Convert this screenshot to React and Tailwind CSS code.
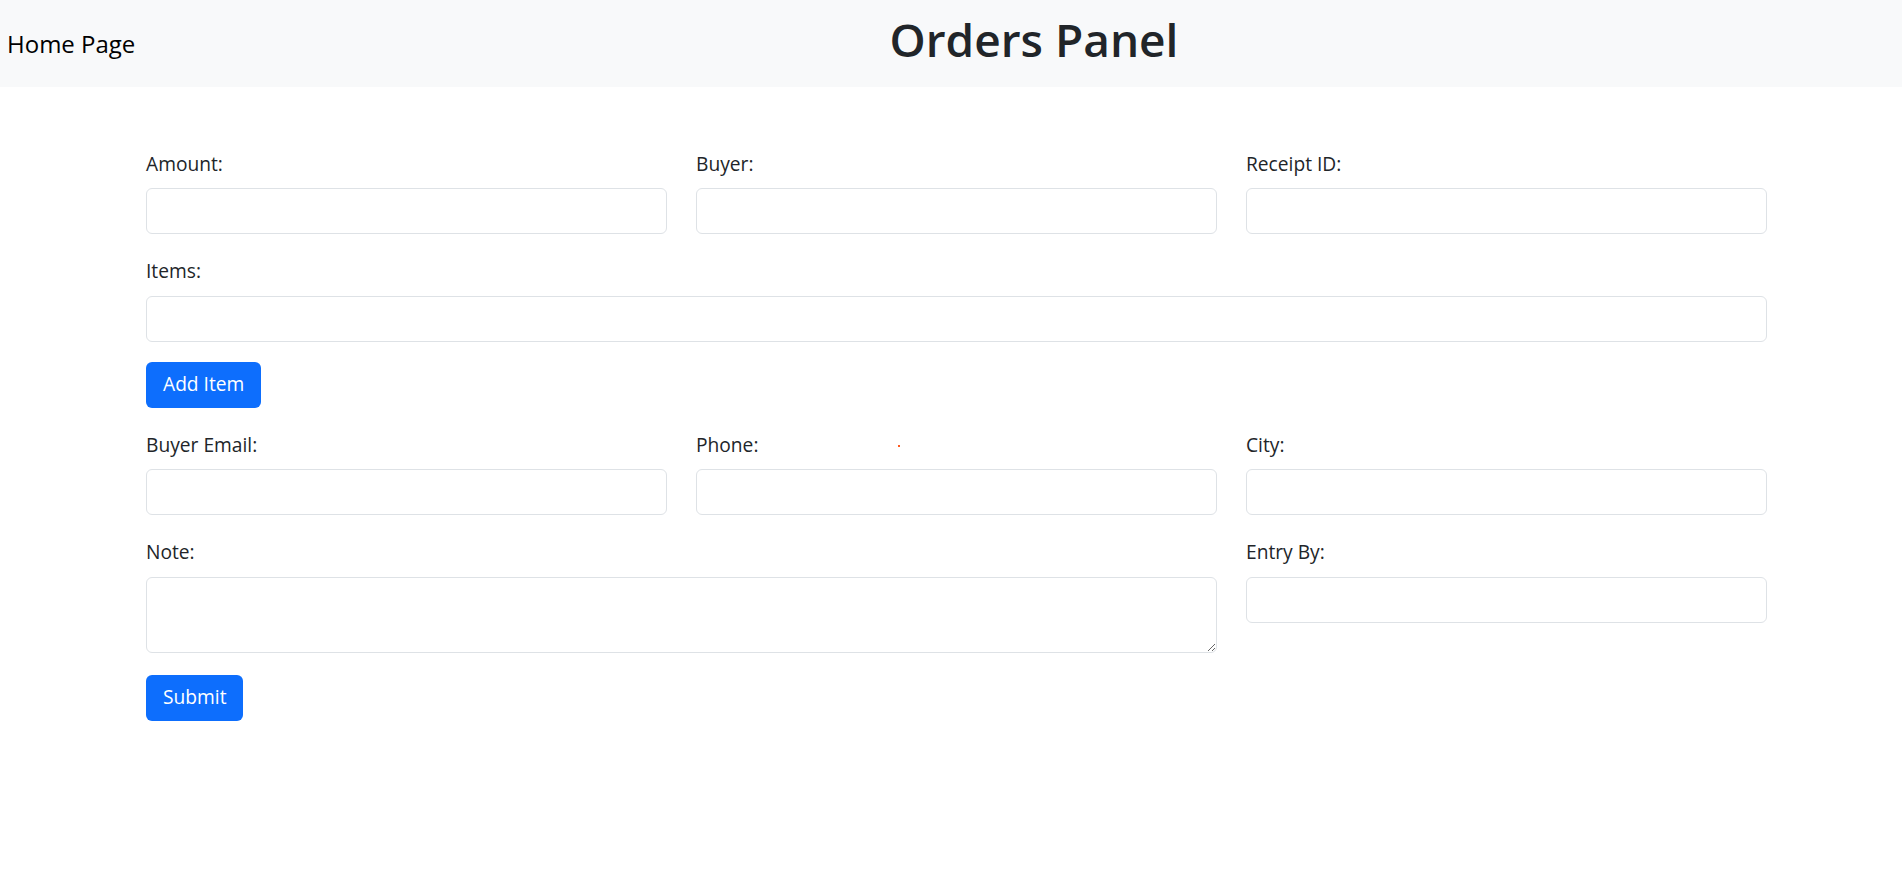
import React, { useState } from "react";

const font = { fontFamily: '"Open Sans", "Noto Sans", sans-serif' };

const Field = ({ label, value, onChange, className = "" }) => (
  <div className={`flex flex-col ${className}`}>
    <label className="text-[19.2px] leading-[28.8px] text-[#212529] mb-[9.6px]">{label}</label>
    <input
      type="text"
      value={value}
      onChange={(e) => onChange(e.target.value)}
      className="h-[46px] w-full rounded-[6px] border border-[#dee2e6] bg-white px-[14px] text-[19.2px] text-[#212529] outline-none"
    />
  </div>
);

const App = () => {
  const [form, setForm] = useState({
    amount: "",
    buyer: "",
    receipt_id: "",
    item: "",
    buyer_email: "",
    phone: "",
    city: "",
    note: "",
    entry_by: "",
  });
  const [items, setItems] = useState([]);

  const set = (key) => (val) => setForm((f) => ({ ...f, [key]: val }));

  const addItem = () => {
    if (!form.item) return;
    setItems([...items, form.item]);
    setForm((f) => ({ ...f, item: "" }));
  };

  return (
    <div className="min-h-screen bg-white relative" style={font}>
      {/* top bar */}
      <div className="h-[87px] bg-[#f8f9fa] flex">
        <a href="#" className="w-[166px] pl-[7px] self-center text-[24px] leading-[36px] text-black no-underline">
          Home Page
        </a>
        <h1 className="flex-1 text-center mt-[11px] text-[46px] leading-[57.6px] font-semibold text-[#212529]">
          Orders Panel
        </h1>
      </div>

      <form onSubmit={(e) => e.preventDefault()} className="ml-[146px] w-[1621px] pt-[63px] flex flex-col">
        <div className="grid grid-cols-3 gap-x-[29px]">
          <Field label="Amount:" value={form.amount} onChange={set("amount")} />
          <Field label="Buyer:" value={form.buyer} onChange={set("buyer")} />
          <Field label="Receipt ID:" value={form.receipt_id} onChange={set("receipt_id")} />
        </div>

        <Field className="mt-[23px]" label="Items:" value={form.item} onChange={set("item")} />

        <div>
          <button
            type="button"
            onClick={addItem}
            className="mt-[20px] h-[46px] px-[17px] rounded-[6px] bg-[#0d6efd] text-white text-[19.2px]"
          >
            Add Item
          </button>
        </div>

        <div className="mt-[23px] grid grid-cols-3 gap-x-[29px]">
          <Field label="Buyer Email:" value={form.buyer_email} onChange={set("buyer_email")} />
          <Field label="Phone:" value={form.phone} onChange={set("phone")} />
          <Field label="City:" value={form.city} onChange={set("city")} />
        </div>

        <div className="mt-[23px] grid grid-cols-3 gap-x-[29px] items-start">
          <div className="col-span-2 flex flex-col">
            <label className="text-[19.2px] leading-[28.8px] text-[#212529] mb-[9.6px]">Note:</label>
            <textarea
              rows={2}
              value={form.note}
              onChange={(e) => set("note")(e.target.value)}
              className="block h-[76px] w-full rounded-[6px] border border-[#dee2e6] bg-white px-[14px] py-[7px] text-[19.2px] text-[#212529] outline-none"
            />
          </div>
          <Field label="Entry By:" value={form.entry_by} onChange={set("entry_by")} />
        </div>

        <div>
          <button
            type="submit"
            className="mt-[22px] h-[46px] px-[17px] rounded-[6px] bg-[#0d6efd] text-white text-[19.2px]"
          >
            Submit
          </button>
        </div>
      </form>

      {/* stray cursor dot */}
      <span className="absolute left-[898px] top-[445px] w-[2px] h-[2px] bg-[#ff5a1f]" />
    </div>
  );
};

export default App;
